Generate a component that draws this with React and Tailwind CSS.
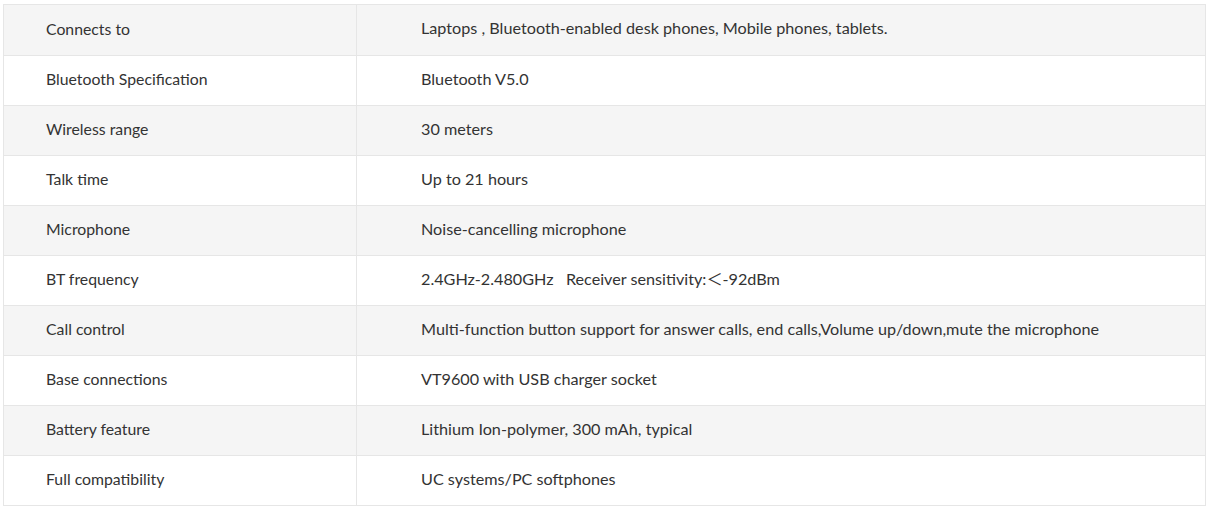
export default function App() {
  const rows = [
    ["Connects to", "Laptops , Bluetooth-enabled desk phones, Mobile phones, tablets."],
    ["Bluetooth Specification", "Bluetooth V5.0"],
    ["Wireless range", "30 meters"],
    ["Talk time", "Up to 21 hours"],
    ["Microphone", "Noise-cancelling microphone"],
    ["BT frequency", "2.4GHz-2.480GHz\u00a0\u00a0\u00a0Receiver sensitivity:\uff1c-92dBm"],
    ["Call control", "Multi-function button support for answer calls, end calls,Volume up/down,mute the microphone"],
    ["Base connections", "VT9600 with USB charger socket"],
    ["Battery feature", "Lithium Ion-polymer, 300 mAh, typical"],
    ["Full compatibility", "UC systems/PC softphones"],
  ];
  return (
    <div className="bg-white w-[1210px] h-[510px] pl-[3px] pt-[4px]" style={{ fontFamily: "Lato, 'Noto Sans CJK SC', sans-serif" }}>
      <div className="w-[1203px] border border-[#e6e6e6]">
        {rows.map(([k, v], i) => (
          <div
            key={i}
            className={`flex h-[50px] text-[#333] ${i % 2 === 0 ? "bg-[#f5f5f5]" : "bg-white"} ${i > 0 ? "border-t border-[#e6e6e6]" : ""}`}
          >
            <div className="w-[353px] shrink-0 border-r border-[#e6e6e6] pl-[42px] pb-[3px] flex items-center text-[15.8px]">{k}</div>
            <div className="pl-[64px] pb-[3px] flex items-center text-[16.2px]">{v}</div>
          </div>
        ))}
      </div>
    </div>
  );
}
